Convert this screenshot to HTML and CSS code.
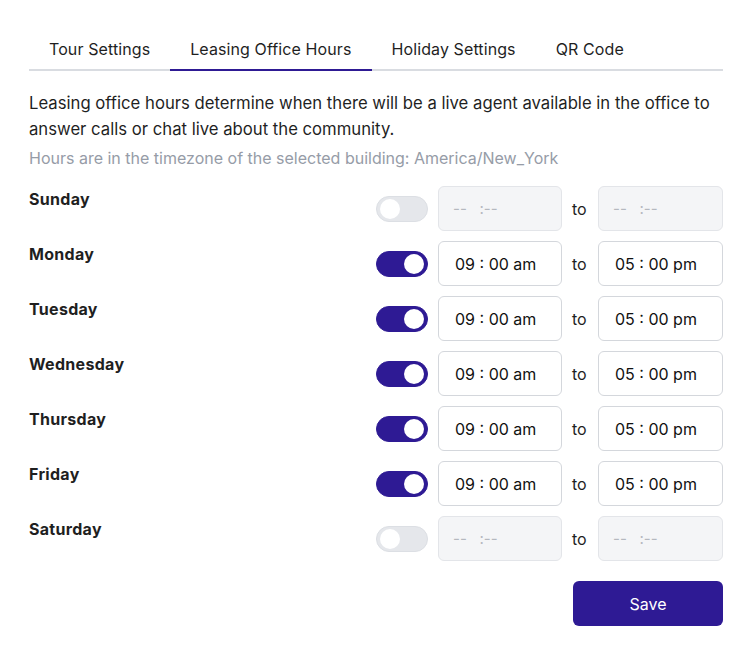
FILE: index.html
```html
<!DOCTYPE html>
<html lang="en">
<head>
  <meta charset="UTF-8" />
  <meta name="viewport" content="width=device-width, initial-scale=1.0" />
  <title>Leasing Office Hours</title>
  <link rel="stylesheet" href="styles.css">
</head>
<body>
  <nav class="tabs">
    <div class="tab">Tour Settings</div>
    <div class="tab active">Leasing Office Hours</div>
    <div class="tab">Holiday Settings</div>
    <div class="tab">QR Code</div>
  </nav>

  <p class="intro">Leasing office hours determine when there will be a live agent available in the office to answer calls or chat live about the community.</p>
  <p class="note">Hours are in the timezone of the selected building: America/New_York</p>

  <div class="hours">
    <div class="row">
      <div class="day">Sunday</div>
      <span class="toggle"></span>
      <div class="time off">--&nbsp;&nbsp;&nbsp;:--</div>
      <span class="to">to</span>
      <div class="time off">--&nbsp;&nbsp;&nbsp;:--</div>
    </div>
    <div class="row">
      <div class="day">Monday</div>
      <span class="toggle on"></span>
      <div class="time">09 : 00 am</div>
      <span class="to">to</span>
      <div class="time">05 : 00 pm</div>
    </div>
    <div class="row">
      <div class="day">Tuesday</div>
      <span class="toggle on"></span>
      <div class="time">09 : 00 am</div>
      <span class="to">to</span>
      <div class="time">05 : 00 pm</div>
    </div>
    <div class="row">
      <div class="day">Wednesday</div>
      <span class="toggle on"></span>
      <div class="time">09 : 00 am</div>
      <span class="to">to</span>
      <div class="time">05 : 00 pm</div>
    </div>
    <div class="row">
      <div class="day">Thursday</div>
      <span class="toggle on"></span>
      <div class="time">09 : 00 am</div>
      <span class="to">to</span>
      <div class="time">05 : 00 pm</div>
    </div>
    <div class="row">
      <div class="day">Friday</div>
      <span class="toggle on"></span>
      <div class="time">09 : 00 am</div>
      <span class="to">to</span>
      <div class="time">05 : 00 pm</div>
    </div>
    <div class="row">
      <div class="day">Saturday</div>
      <span class="toggle"></span>
      <div class="time off">--&nbsp;&nbsp;&nbsp;:--</div>
      <span class="to">to</span>
      <div class="time off">--&nbsp;&nbsp;&nbsp;:--</div>
    </div>
  </div>

  <div class="actions">
    <button class="save">Save</button>
  </div>
</body>
</html>
```

FILE: styles.css
```css
body {
  margin: 0;
  padding: 37px 29px 0 29px;
  width: 694px;
  font-family: Inter, "Noto Sans", sans-serif;
  font-size: 16px;
  color: #1f1f1f;
  background: #fff;
}
.tabs {
  display: flex;
  border-bottom: 2px solid #d9dce1;
}
.tab {
  padding: 0 20px 8px 20px;
  line-height: 24px;
  letter-spacing: 0.1px;
  margin-bottom: -2px;
  border-bottom: 2px solid transparent;
}
.tab.active {
  border-bottom-color: #2e1a94;
}
.intro {
  margin: 19px 0 4px 0;
  font-size: 16.7px;
  line-height: 26px;
}
.note {
  margin: 0 0 16px 0;
  line-height: 24px;
  color: #969ca7;
}
.hours {
  display: flex;
  flex-direction: column;
  gap: 10px;
}
.row {
  display: flex;
  align-items: center;
  gap: 10px;
  height: 45px;
}
.day {
  flex: 1;
  align-self: flex-start;
  padding-top: 1px;
  font-weight: 700;
  line-height: 24px;
  letter-spacing: 0.3px;
}
.toggle {
  position: relative;
  width: 52px;
  height: 26px;
  box-sizing: border-box;
  border-radius: 13px;
  background: #e5e7eb;
  border: 1px solid #dcdfe4;
}
.toggle::after {
  content: "";
  position: absolute;
  top: 2px;
  left: 3px;
  width: 20px;
  height: 20px;
  border-radius: 50%;
  background: #fff;
}
.toggle.on {
  background: #2e1a94;
  border-color: #2e1a94;
}
.toggle.on::after {
  left: auto;
  right: 3px;
}
.time {
  width: 124px;
  height: 45px;
  box-sizing: border-box;
  padding: 0 14px;
  border: 1px solid #d4d7dc;
  border-radius: 6px;
  display: flex;
  align-items: center;
  color: #111;
}
.time:not(.off) {
  padding-left: 16px;
}
.time + .to + .time {
  width: 125px;
}
.time.off {
  background: #f4f5f7;
  border-color: #e3e5e9;
  color: #b4b8bf;
  font-size: 15px;
}
.to {
  width: 16px;
}
.actions {
  display: flex;
  justify-content: flex-end;
  margin-top: 20px;
}
.save {
  width: 150px;
  height: 45px;
  border: none;
  border-radius: 6px;
  background: #2e1a94;
  color: #fff;
  font-family: inherit;
  font-size: 16px;
  cursor: pointer;
}
```
